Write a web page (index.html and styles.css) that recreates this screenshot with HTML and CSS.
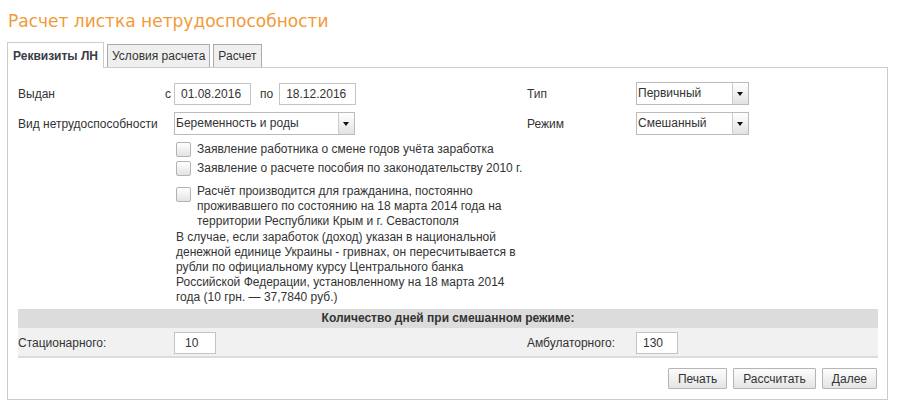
FILE: index.html
```html
<!DOCTYPE html>
<html lang="ru">
<head>
    <meta charset="UTF-8">
    <title>Расчет листка нетрудоспособности</title>
    <link rel="stylesheet" href="styles.css">
</head>
<body>
<h1 class="page-title">Расчет листка нетрудоспособности</h1>

<div class="tabs">
    <div class="tab active">Реквизиты ЛН</div>
    <div class="tab">Условия расчета</div>
    <div class="tab">Расчет</div>
</div>

<div class="panel">
    <div class="form-grid">
        <div class="label split"><span>Выдан</span><span>с</span></div>
        <div class="field">
            <input class="text date" type="text" value="01.08.2016">
            <span class="sep">по</span>
            <input class="text date" type="text" value="18.12.2016">
        </div>
        <div class="label">Тип</div>
        <div class="field">
            <div class="select short"><span class="select-value">Первичный</span><span class="select-btn"></span></div>
        </div>

        <div class="label">Вид нетрудоспособности</div>
        <div class="field">
            <div class="select wide"><span class="select-value">Беременность и роды</span><span class="select-btn"></span></div>
        </div>
        <div class="label">Режим</div>
        <div class="field">
            <div class="select short"><span class="select-value">Смешанный</span><span class="select-btn"></span></div>
        </div>
    </div>

    <div class="checks">
        <div class="check"><span class="box"></span><span class="check-text">Заявление работника о смене годов учёта заработка</span></div>
        <div class="check"><span class="box"></span><span class="check-text">Заявление о расчете пособия по законодательству 2010 г.</span></div>
        <div class="check tall"><span class="box"></span><span class="check-text">Расчёт производится для гражданина, постоянно<br>проживавшего по состоянию на 18 марта 2014 года на<br>территории Республики Крым и г. Севастополя</span></div>
        <p class="note">В случае, если заработок (доход) указан в национальной<br>денежной единице Украины - гривнах, он пересчитывается в<br>рубли по официальному курсу Центрального банка<br>Российской Федерации, установленному на 18 марта 2014<br>года (10 грн. — 37,7840 руб.)</p>
    </div>

    <div class="mixed">
        <div class="mixed-head">Количество дней при смешанном режиме:</div>
        <div class="mixed-row">
            <div class="label">Стационарного:</div>
            <div class="field"><input class="text days first" type="text" value="10"></div>
            <div class="label right">Амбулаторного:</div>
            <div class="field"><input class="text days" type="text" value="130"></div>
        </div>
    </div>

    <div class="actions">
        <button class="btn">Печать</button>
        <button class="btn">Рассчитать</button>
        <button class="btn">Далее</button>
    </div>
</div>
</body>
</html>
```

FILE: styles.css
```css
/* page */
* {
    box-sizing: border-box;
}
body {
    margin: 0;
    padding: 0 9px 0 7px;
    font-family: "Liberation Sans", Arial, sans-serif;
    font-size: 12px;
    color: #333;
    background-color: #fff;
}
.page-title {
    margin: 11px 0 10px 1px;
    font-family: "DejaVu Sans", Verdana, sans-serif;
    font-weight: normal;
    font-size: 17px;
    line-height: 21px;
    color: #f39a38;
}

/* tabs */
.tabs {
    display: flex;
    align-items: flex-end;
    gap: 3px;
    height: 25px;
}
.tab {
    height: 23px;
    line-height: 22px;
    padding: 0 4px;
    border: 1px solid #aaa;
    border-bottom: none;
    background-color: #efefef;
    color: #333;
}
.tab.active {
    position: relative;
    z-index: 1;
    height: 26px;
    line-height: 27px;
    margin-bottom: -1px;
    padding: 0 5px;
    border-color: #ccc;
    background-color: #fff;
    font-weight: bold;
    color: #3a3a48;
}

/* panel */
.panel {
    border: 1px solid #ccc;
    padding: 14px 9px 10px 10px;
}
.form-grid,
.mixed-row {
    display: grid;
    grid-template-columns: 156px 353px 109px 1fr;
    align-items: center;
}
.form-grid {
    row-gap: 7px;
    grid-auto-rows: 23px;
}
.label.split {
    display: flex;
    justify-content: space-between;
    padding-right: 3px;
}
.field {
    display: flex;
    align-items: center;
}
.text {
    height: 22px;
    padding: 0 6px;
    border: 1px solid #c4c4c4;
    background-color: #fff;
    font-family: inherit;
    font-size: 12px;
    color: #333;
    outline: none;
}
.text.date {
    width: 77px;
}
.sep {
    margin: 0 6px 0 9px;
}

/* combobox */
.select {
    display: flex;
    height: 23px;
    border: 1px solid #bbb;
    background-color: #fff;
}
.select.wide {
    width: 181px;
}
.select.short {
    width: 113px;
}
.select-value {
    flex: 1;
    line-height: 21px;
    padding-left: 1px;
    color: #333;
}
.select-btn {
    position: relative;
    width: 16px;
    border-left: 1px solid #ccc;
    background: linear-gradient(#fff, #e2e2e2);
}
.select-btn::after {
    content: "";
    position: absolute;
    left: 4px;
    top: 9px;
    border-left: 3.5px solid transparent;
    border-right: 3.5px solid transparent;
    border-top: 4px solid #111;
}

/* checkboxes */
.checks {
    margin: 7px 0 0 158px;
}
.check {
    display: flex;
    align-items: flex-start;
    gap: 6px;
    line-height: 15px;
}
.check + .check {
    margin-top: 4px;
}
.check.tall {
    margin-top: 8px;
}
.check.tall .box {
    margin-top: 3px;
}
.box {
    flex: none;
    width: 15px;
    height: 15px;
    border: 1px solid #b3b3b3;
    border-radius: 2px;
    background: linear-gradient(#fff, #e3e3e3);
}
.note {
    margin: 1px 0 0;
    line-height: 15px;
}

/* mixed mode block */
.mixed {
    margin-top: 4px;
}
.mixed-head {
    height: 19px;
    line-height: 19px;
    background-color: #dcdcdc;
    text-align: center;
    font-weight: bold;
}
.mixed-row {
    height: 30px;
    padding: 4px 0 2px;
    background-color: #f1f1f1;
    border-bottom: 2px solid #dcdcdc;
}
.label.right {
    text-align: left;
}
.text.days {
    width: 42px;
}
.text.days.first {
    padding-left: 10px;
}

/* buttons */
.actions {
    display: flex;
    justify-content: flex-end;
    gap: 6px;
    margin-top: 10px;
    padding-right: 1px;
}
.btn {
    height: 21px;
    padding: 0 9px;
    border: 1px solid #b5b5b5;
    border-radius: 1px;
    background: linear-gradient(#fdfdfd, #e4e4e4);
    font-family: inherit;
    font-size: 12px;
    color: #333;
    cursor: pointer;
}
```
